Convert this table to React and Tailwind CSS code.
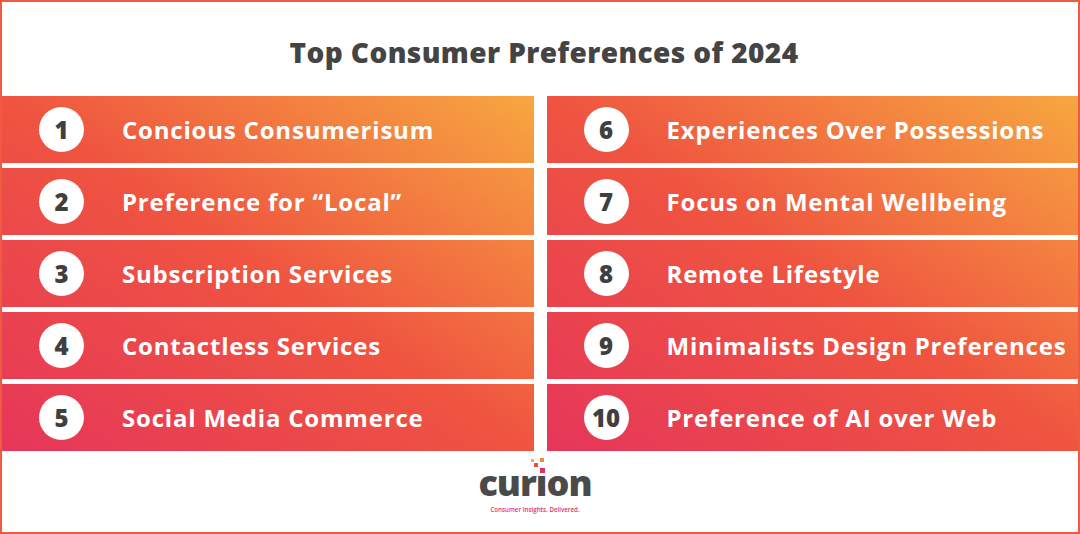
import React from "react";

const left = [
  "Concious Consumerisum",
  "Preference for “Local”",
  "Subscription Services",
  "Contactless Services",
  "Social Media Commerce",
];

const right = [
  "Experiences Over Possessions",
  "Focus on Mental Wellbeing",
  "Remote Lifestyle",
  "Minimalists Design Preferences",
  "Preference of AI over Web",
];

const Column = ({ items, start }) => (
  <div className="flex flex-col divide-y-[5px] divide-white bg-[linear-gradient(to_top_right,#e6365a_0%,#ef5440_50%,#f7a740_100%)]">
    {items.map((label, i) => (
      <div key={label} className="h-[67px] box-content flex items-center pl-[37px]">
        <div className="w-[45px] h-[45px] rounded-full bg-white flex items-center justify-center shrink-0">
          <span className="text-[24px] font-extrabold text-[#3f3f3f] leading-none">
            {start + i}
          </span>
        </div>
        <span className="ml-[38px] text-[24px] font-bold text-white tracking-[0.8px] leading-none">
          {label}
        </span>
      </div>
    ))}
  </div>
);

const Logo = () => (
  <div className="flex flex-col items-center pr-[10px]">
    <div className="text-[36px] font-extrabold text-[#4a4a4a] leading-none tracking-[-1px] flex">
      <span>cur</span>
      <span className="relative">
        ı
        <svg
          className="absolute left-[-5px] top-[-7px]"
          width="16"
          height="16"
          viewBox="0 0 16 16"
        >
          <rect x="0" y="1" width="3" height="3" fill="#f7b04a" />
          <rect x="9" y="0" width="4" height="4" fill="#f08a3a" />
          <rect x="3" y="5" width="4" height="4" fill="#ec4a3c" />
          <rect x="9" y="10" width="5" height="5" fill="#e43064" />
        </svg>
      </span>
      <span>on</span>
    </div>
    <span className="mt-[6px] text-[6.2px] font-semibold text-[#e2336b] leading-none">
      Consumer Insights. Delivered.
    </span>
  </div>
);

export default function App() {
  return (
    <div
      className="w-[1080px] h-[534px] border-2 border-[#f05a40] bg-white flex flex-col"
      style={{ fontFamily: '"Open Sans", "Liberation Sans", sans-serif' }}
    >
      <div className="h-[94px] flex items-center justify-center pt-[6px] pl-[8px]">
        <h1 className="text-[28px] font-extrabold text-[#444444] leading-none tracking-[0.4px]">
          Top Consumer Preferences of 2024
        </h1>
      </div>
      <div className="grid grid-cols-2 gap-[13px]">
        <Column items={left} start={1} />
        <Column items={right} start={6} />
      </div>
      <div className="flex-1 flex items-start justify-center pt-[14px]">
        <Logo />
      </div>
    </div>
  );
}
